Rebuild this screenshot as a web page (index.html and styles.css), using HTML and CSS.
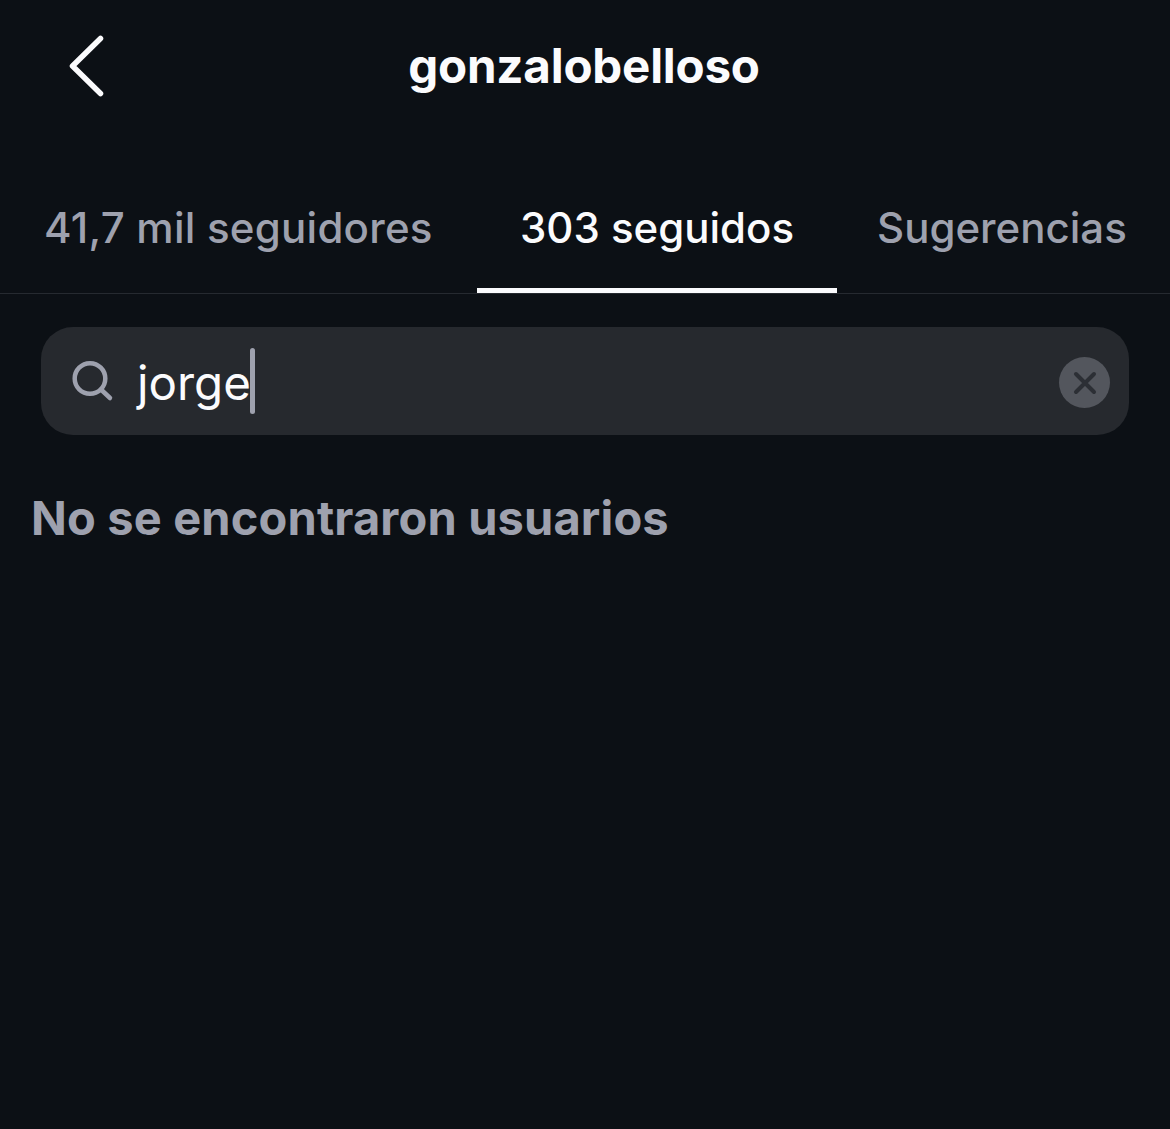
FILE: index.html
```html
<!DOCTYPE html>
<html lang="es">
<head>
<meta charset="utf-8">
<title>gonzalobelloso</title>
<link rel="stylesheet" href="styles.css">
</head>
<body>
<main class="screen">
  <header class="topbar">
    <svg class="back" width="40" height="66" viewBox="0 0 40 66"><path d="M33.500 5.500 L5.500 33 L33.500 60.500" fill="none" stroke="#fbfbfd" stroke-width="5.500" stroke-linecap="round" stroke-linejoin="round"/></svg>
    <h1 class="title">gonzalobelloso</h1>
  </header>
  <nav class="tabs">
    <div class="tab tab-first">41,7 mil seguidores</div>
    <div class="tab tab-active">303 seguidos</div>
    <div class="tab tab-last">Sugerencias</div>
  </nav>
  <div class="search">
    <svg class="search-icon" width="42" height="42" viewBox="0 0 42 42"><circle cx="18" cy="18.500" r="15.300" fill="none" stroke="#9ea1ae" stroke-width="4.500"/><path d="M29 29.500 L38 38" stroke="#9ea1ae" stroke-width="4.500" stroke-linecap="round"/></svg>
    <span class="query">jorge</span><span class="caret"></span>
    <span class="clear">
      <svg width="26" height="26" viewBox="0 0 26 26"><path d="M4 4 L22 22 M22 4 L4 22" stroke="#2c2f35" stroke-width="4" stroke-linecap="round"/></svg>
    </span>
  </div>
  <p class="empty">No se encontraron usuarios</p>
</main>
</body>
</html>
```

FILE: styles.css
```css
* { box-sizing: border-box; }
html, body { margin: 0; padding: 0; }
body { background: #0c1015; font-family: Inter, "Liberation Sans", sans-serif; }
.screen { width: 1170px; height: 1129px; overflow: hidden; background: #0c1015; }
.topbar { height: 132px; display: flex; align-items: center; justify-content: center; padding-right: 2px; position: relative; }
.back { position: absolute; left: 67px; top: 33px; }
.title { margin: 0; color: #fbfbfd; font-size: 47.500px; font-weight: 700; letter-spacing: -0.2px; line-height: 1; }
.tabs { height: 162px; display: flex; align-items: stretch; border-bottom: 1px solid #262a30; }
.tab { display: flex; align-items: center; height: 161px; padding-top: 35px; font-size: 42px; font-weight: 550; color: #9ea1ae; white-space: nowrap; border-bottom: 5px solid transparent; }
.tab-first { width: 477px; padding-left: 44px; letter-spacing: 0.25px; }
.tab-active { width: 360px; justify-content: center; color: #fbfbfd; border-bottom-color: #fbfbfd; }
.tab-last { padding-left: 40px; }
.search { margin: 33px 41px 0; height: 108px; background: #26292e; border-radius: 32px; display: flex; align-items: center; padding: 0 19px 0 31px; }
.search-icon { flex: none; }
.query { margin-left: 23px; margin-top: 3px; color: #fbfbfd; font-size: 47.500px; font-weight: 400; }
.caret { width: 5px; height: 66px; background: #9ea1ae; border-radius: 3px; margin-left: -1px; }
.clear { margin-left: auto; margin-top: 3px; width: 51px; height: 51px; border-radius: 50%; background: #53565d; display: flex; align-items: center; justify-content: center; }
.empty { margin: 56px 0 0 31px; color: #9ea1ae; font-size: 47px; font-weight: 700; letter-spacing: 0.15px; line-height: 54px; }
```
